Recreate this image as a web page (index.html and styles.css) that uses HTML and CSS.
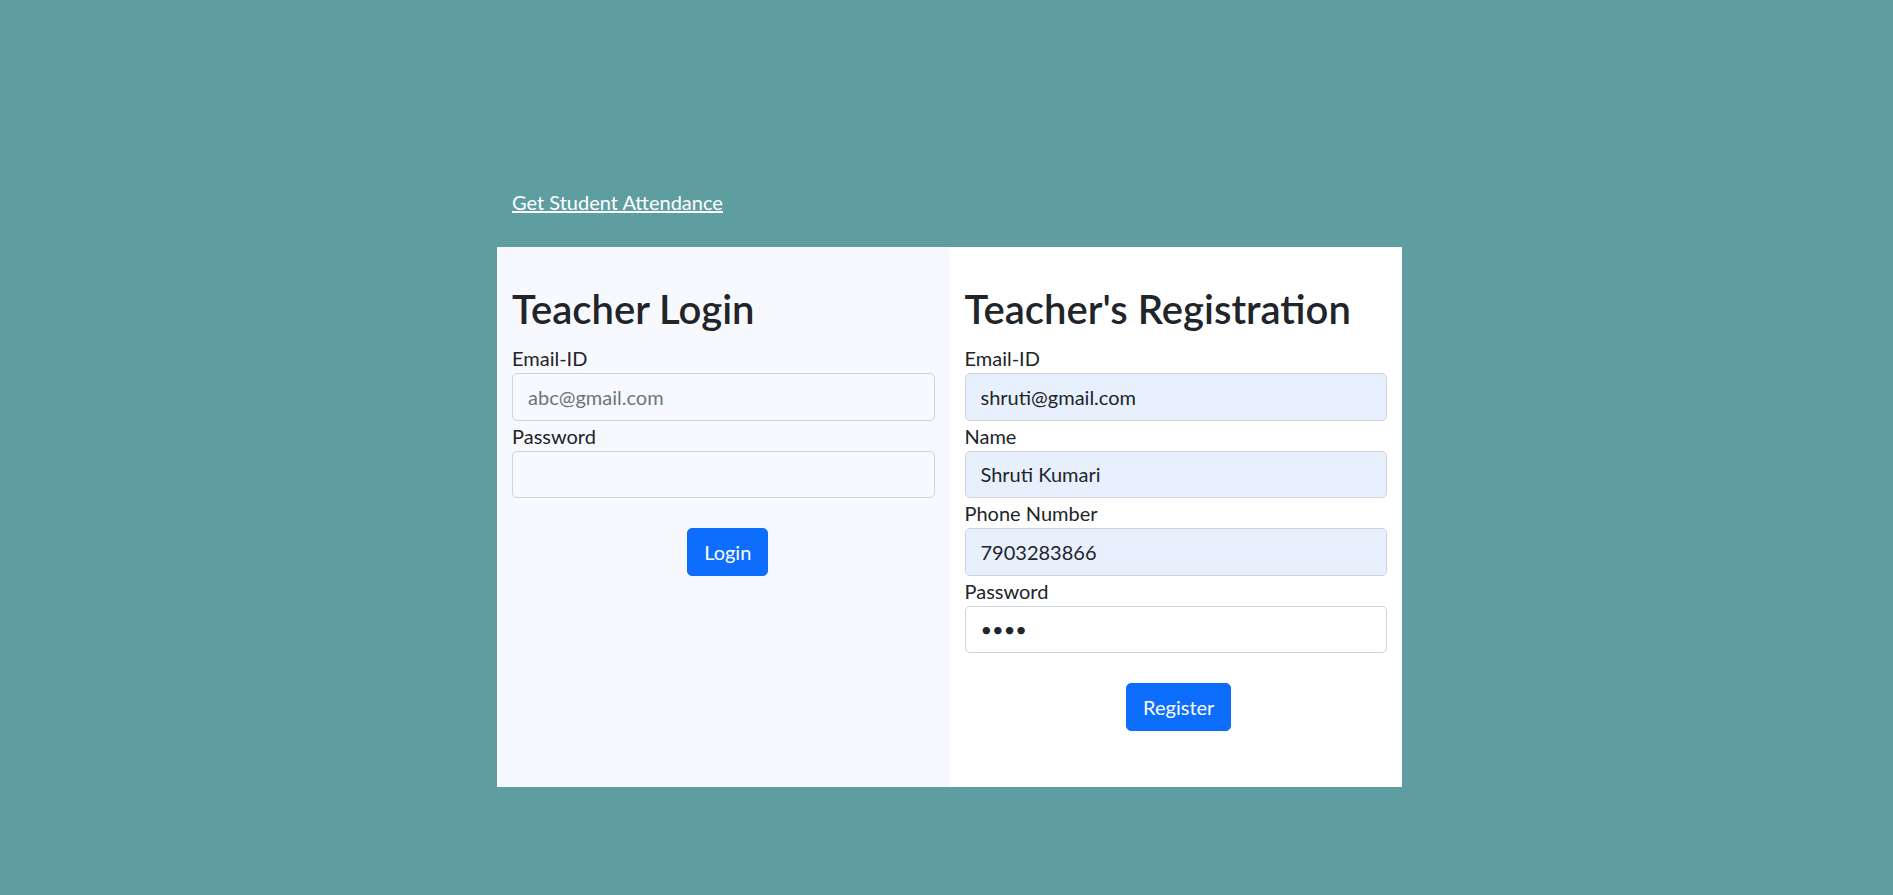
FILE: index.html
```html
<!DOCTYPE html>
<html lang="en">
<head>
<meta charset="utf-8">
<title>Teacher Login</title>
<link rel="stylesheet" href="styles.css">
</head>
<body>
<div class="wrap">
  <div class="topbar"><a class="top-link" href="#">Get Student Attendance</a></div>
  <div class="card">
    <div class="col col-login">
      <h2 class="title">Teacher Login</h2>
      <label class="label" for="le">Email-ID</label>
      <input class="field" id="le" type="text" placeholder="abc@gmail.com">
      <label class="label" for="lp">Password</label>
      <input class="field" id="lp" type="password">
      <div class="actions actions-login"><button class="btn" type="button">Login</button></div>
    </div>
    <div class="col col-reg">
      <h2 class="title">Teacher's Registration</h2>
      <label class="label" for="re">Email-ID</label>
      <input class="field filled" id="re" type="text" value="shruti@gmail.com">
      <label class="label" for="rn">Name</label>
      <input class="field filled" id="rn" type="text" value="Shruti Kumari">
      <label class="label" for="rph">Phone Number</label>
      <input class="field filled" id="rph" type="text" value="7903283866">
      <label class="label" for="rp">Password</label>
      <input class="field white" id="rp" type="password" value="abcd">
      <div class="actions actions-reg"><button class="btn" type="button">Register</button></div>
    </div>
  </div>
</div>
</body>
</html>
```
FILE: styles.css
```css
* { box-sizing: border-box; }
html, body { margin: 0; padding: 0; }
body {
  background: #5f9ea0;
  font-family: Lato, "Noto Sans", sans-serif;
  color: #212529;
  font-size: 20px;
  line-height: 30px;
  height: 895px;
  overflow: hidden;
}
.wrap {
  width: 905px;
  margin-left: 497px;
}
.topbar {
  padding: 187px 15px 0;
  height: 247px;
}
.top-link {
  color: #fff;
  text-decoration: underline;
  font-size: 20px;
  line-height: 30px;
}
.card {
  display: flex;
  height: 540px;
}
.col {
  flex: 1 1 0;
  display: flex;
  flex-direction: column;
  padding: 38px 15px 0;
}
.col-login { background: #f8f8ff; }
.col-reg { background: #fff; }
.title {
  margin: 0 0 10px;
  font-size: 40px;
  line-height: 48px;
  font-weight: 600;
  white-space: nowrap;
  color: #212529;
}
.label {
  display: block;
  font-size: 20px;
  line-height: 30px;
  color: #212529;
}
.field {
  display: block;
  width: 100%;
  height: 47.5px;
  padding: 7px 15px;
  border: 1px solid #ced4da;
  border-radius: 5px;
  background: transparent;
  font-family: inherit;
  font-size: 20px;
  line-height: 30px;
  color: #212529;
  outline: none;
}
.field::placeholder { color: #6c757d; }
.filled { background: #e8f0fe; }
.white { background: #fff; }
.actions {
  display: flex;
  justify-content: center;
  margin-top: 30px;
}
.actions-login { padding-left: 9px; }
.actions-reg { padding-left: 6px; }
.btn {
  height: 48px;
  padding: 0 16px;
  border: 1px solid #0d6efd;
  border-radius: 5px;
  background: #0d6efd;
  color: #fff;
  font-family: inherit;
  font-size: 20px;
  line-height: 30px;
}
```
